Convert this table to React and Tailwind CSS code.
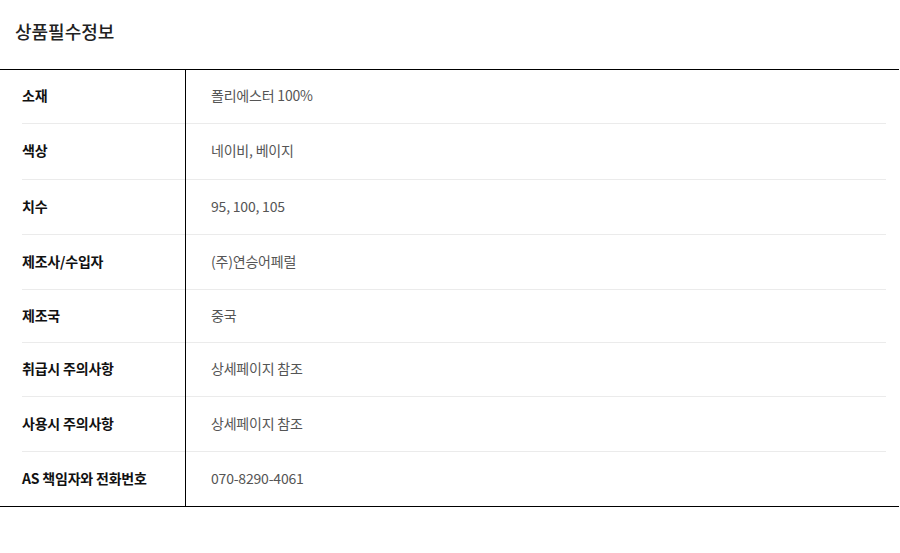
import React from "react";

const rows = [
    { label: "소재", value: "폴리에스터 100%", h: "h-[54px]" },
    { label: "색상", value: "네이비, 베이지", h: "h-[56px]" },
    { label: "치수", value: "95, 100, 105", h: "h-[55px]" },
    { label: "제조사/수입자", value: "(주)연승어페럴", h: "h-[55px]" },
    { label: "제조국", value: "중국", h: "h-[53px]" },
    { label: "취급시 주의사항", value: "상세페이지 참조", h: "h-[54px]" },
    { label: "사용시 주의사항", value: "상세페이지 참조", h: "h-[55px]" },
    { label: "AS 책임자와 전화번호", value: "070-8290-4061", h: "h-[54px]" },
];

export default function App() {
    return (
        <div className="w-[900px] h-[553px] bg-white font-['Noto_Sans_CJK_KR','Noto_Sans',sans-serif] text-[#222]">
            <h2 className="pl-[15px] pt-[18px] h-[69px] text-[18px] font-medium leading-[26px]">
                상품필수정보
            </h2>

            <div className="w-[899px] border-t border-b border-black">
                {rows.map((row, i) => {
                    const last = i === rows.length - 1;
                    return (
                        <div key={row.label} className={`grid grid-cols-[186px_1fr] ${row.h}`}>
                            <div className="border-r border-black pl-[22px] flex">
                                <div className={`flex-1 flex items-center pb-[2px] text-[14px] font-bold text-[#111] tracking-[-0.2px] ${last ? "" : "border-b border-[#ebebeb]"}`}>
                                    {row.label}
                                </div>
                            </div>
                            <div className="pr-[13px] flex">
                                <div className={`flex-1 flex items-center pb-[2px] pl-[25px] text-[14px] text-[#555] tracking-[-0.2px] ${last ? "" : "border-b border-[#ebebeb]"}`}>
                                    {row.value}
                                </div>
                            </div>
                        </div>
                    );
                })}
            </div>
        </div>
    );
}
